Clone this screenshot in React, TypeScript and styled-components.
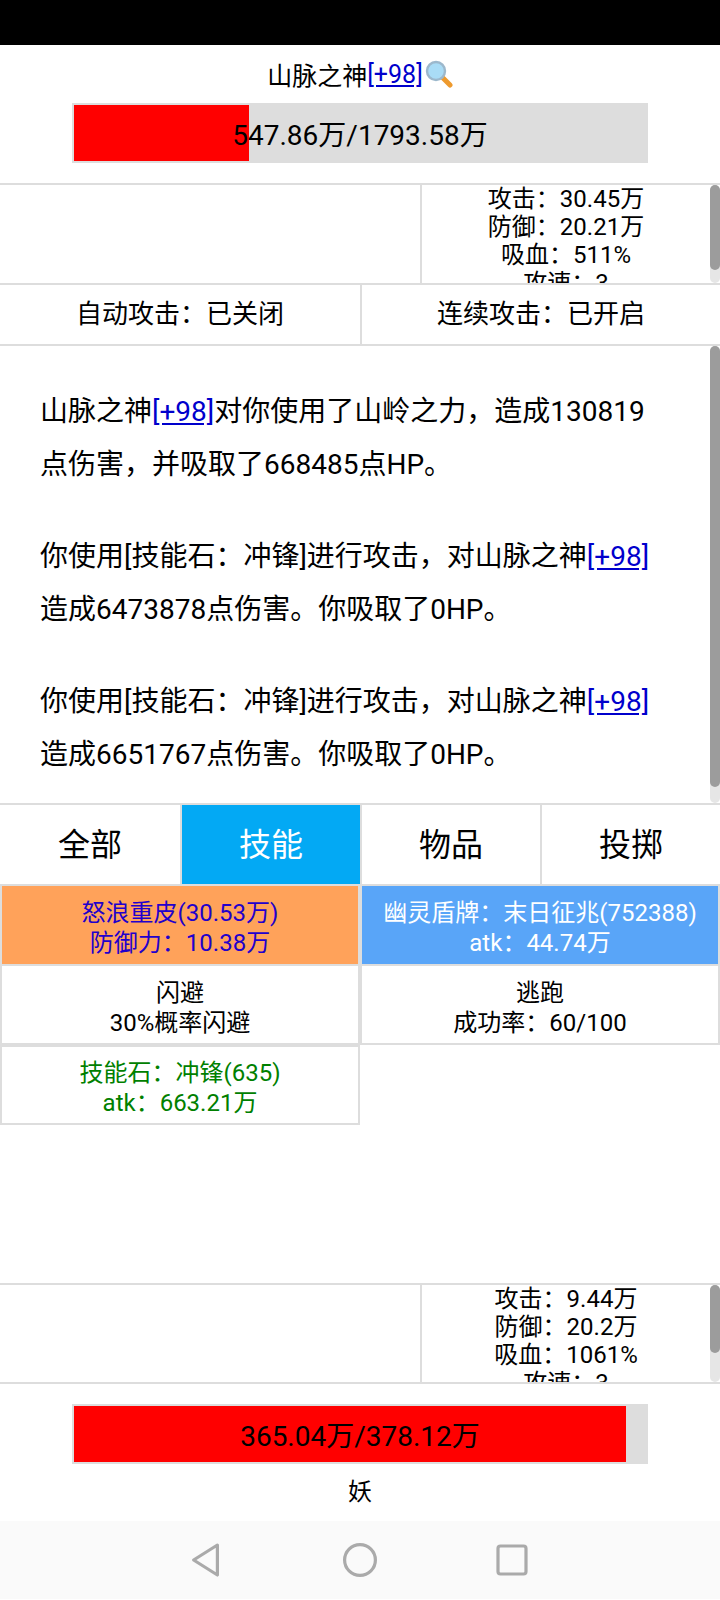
import React from 'react';
import styled, { createGlobalStyle } from 'styled-components';

type Tone = 'plain' | 'armor' | 'shield' | 'stone';

const skills: { lines: string[]; tone: Tone; joined?: boolean }[] = [
  { lines: ['怒浪重皮(30.53万)', '防御力：10.38万'], tone: 'armor' },
  { lines: ['幽灵盾牌：末日征兆(752388)', 'atk：44.74万'], tone: 'shield' },
  { lines: ['闪避', '30%概率闪避'], tone: 'plain', joined: true },
  { lines: ['逃跑', '成功率：60/100'], tone: 'plain', joined: true },
  { lines: ['技能石：冲锋(635)', 'atk：663.21万'], tone: 'stone' },
];

const tabs = ['全部', '技能', '物品', '投掷'];

const Boss = () => (
  <>
    山脉之神<LevelLink>[+98]</LevelLink>
  </>
);

const App: React.FC = () => {
  return (
    <Page lang="zh-CN">
      <GlobalStyle />
      <StatusBar />
      <Title>
        <Boss />
        <Lens viewBox="0 0 28 28">
          <line x1="17" y1="17" x2="25" y2="25" stroke="#ee9a2e" strokeWidth="5" strokeLinecap="round" />
          <circle cx="11" cy="11" r="9" fill="#a9dcf6" stroke="#9cb8cc" strokeWidth="2.4" />
        </Lens>
      </Title>
      <HpBar current={547.86} max={1793.58} label="547.86万/1793.58万" />
      <StatPanel top>
        <div />
        <StatCell>
          <StatList>
            <div>攻击：30.45万</div>
            <div>防御：20.21万</div>
            <div>吸血：511%</div>
            <div>攻速：3</div>
          </StatList>
          <ScrollTrack>
            <ScrollThumb size={85} />
          </ScrollTrack>
        </StatCell>
      </StatPanel>
      <ToggleRow>
        <Toggle>自动攻击：已关闭</Toggle>
        <Toggle>连续攻击：已开启</Toggle>
      </ToggleRow>
      <LogPanel>
        <BattleLog>
          <p>
            <Boss />对你使用了山岭之力，造成130819点伤害，并吸取了668485点HP。
          </p>
          <p>
            你使用[技能石：冲锋]进行攻击，对山脉之神<LevelLink>[+98]</LevelLink>造成6473878点伤害。你吸取了0HP。
          </p>
          <p>
            你使用[技能石：冲锋]进行攻击，对山脉之神<LevelLink>[+98]</LevelLink>造成6651767点伤害。你吸取了0HP。
          </p>
        </BattleLog>
        <ScrollTrack>
          <ScrollThumb size={441} />
        </ScrollTrack>
      </LogPanel>
      <TabBar>
        {tabs.map((t) => (
          <Tab key={t} active={t === '技能'}>
            {t}
          </Tab>
        ))}
      </TabBar>
      <SkillGrid>
        {skills.map((s) => (
          <SkillCard key={s.lines[0]} tone={s.tone} joined={s.joined}>
            {s.lines.map((l) => (
              <div key={l}>{l}</div>
            ))}
          </SkillCard>
        ))}
      </SkillGrid>
      <StatPanel>
        <div />
        <StatCell>
          <StatList>
            <div>攻击：9.44万</div>
            <div>防御：20.2万</div>
            <div>吸血：1061%</div>
            <div>攻速：3</div>
          </StatList>
          <ScrollTrack>
            <ScrollThumb size={68} />
          </ScrollTrack>
        </StatCell>
      </StatPanel>
      <HpBar current={365.04} max={378.12} label="365.04万/378.12万" bottom />
      <PlayerName>妖</PlayerName>
      <NavBar>
        <svg width="36" height="36" viewBox="0 0 36 36">
          <path d="M27.4 3 L3.6 18 L27.4 33 Z" fill="none" stroke="#aaa" strokeWidth="3.2" strokeLinejoin="round" />
        </svg>
        <svg width="36" height="36" viewBox="0 0 36 36">
          <circle cx="18" cy="18" r="15.4" fill="none" stroke="#aaa" strokeWidth="3.2" />
        </svg>
        <svg width="34" height="34" viewBox="0 0 34 34">
          <rect x="3" y="3" width="28" height="28" rx="2.5" fill="none" stroke="#aaa" strokeWidth="3.2" />
        </svg>
      </NavBar>
    </Page>
  );
};

const HpBar: React.FC<{ current: number; max: number; label: string; bottom?: boolean }> = ({
  current,
  max,
  label,
  bottom,
}) => (
  <BarTrack bottom={bottom}>
    <BarFill style={{ width: `${(current / max) * 100}%` }} />
    <BarLabel>{label}</BarLabel>
  </BarTrack>
);

export default App;

const GlobalStyle = createGlobalStyle`
  html, body {
    margin: 0;
    padding: 0;
    background: #fff;
  }
  body {
    font-family: Roboto, "Noto Sans CJK SC", sans-serif;
    color: #000;
  }
  * {
    box-sizing: border-box;
  }
`;

const Page = styled.div`
  width: 720px;
  height: 1600px;
  display: flex;
  flex-direction: column;
  overflow: hidden;
`;

const StatusBar = styled.div`
  height: 45px;
  background: #000;
`;

const Title = styled.div`
  height: 58px;
  display: flex;
  align-items: center;
  justify-content: center;
  font-size: 25px;
`;

const Lens = styled.svg`
  width: 28px;
  height: 28px;
  margin-left: 2px;
`;

const LevelLink = styled.span`
  color: #0000cc;
  text-decoration: underline;
`;

const BarTrack = styled.div<{ bottom?: boolean }>`
  position: relative;
  width: 576px;
  height: 60px;
  margin: ${(p) => (p.bottom ? '20px' : '0')} 72px ${(p) => (p.bottom ? '0' : '20px')};
  border: 2px solid #ddd;
  background: #ddd;
`;

const BarFill = styled.div`
  height: 100%;
  background: #f00;
`;

const BarLabel = styled.div`
  position: absolute;
  inset: 0;
  display: flex;
  align-items: center;
  justify-content: center;
  font-size: 28px;
`;

const StatPanel = styled.div<{ top?: boolean }>`
  height: ${(p) => (p.top ? '100px' : '101px')};
  flex: none;
  display: grid;
  grid-template-columns: 420px 1fr;
  border-top: 2px solid #ddd;
  border-bottom: ${(p) => (p.top ? '0' : '2px solid #ddd')};
`;

const StatCell = styled.div`
  position: relative;
  border-left: 2px solid #ddd;
  overflow: hidden;
`;

const StatList = styled.div`
  padding-right: 10px;
  text-align: center;
  font-size: 24px;
  line-height: 28px;
`;

const ScrollTrack = styled.div`
  position: absolute;
  top: 0;
  right: 0;
  bottom: 0;
  width: 10px;
  border-radius: 5px;
  background: #e6e6e6;
`;

const ScrollThumb = styled.div<{ size: number }>`
  height: ${(p) => p.size}px;
  border-radius: 5px;
  background: #9c9c9c;
`;

const ToggleRow = styled.div`
  height: 63px;
  flex: none;
  display: grid;
  grid-template-columns: 1fr 1fr;
  border-top: 2px solid #ddd;
  border-bottom: 2px solid #ddd;
`;

const Toggle = styled.div`
  display: flex;
  align-items: center;
  justify-content: center;
  padding-bottom: 7px;
  font-size: 26px;
  & + & {
    border-left: 2px solid #ddd;
  }
`;

const LogPanel = styled.div`
  position: relative;
  height: 457px;
  flex: none;
  overflow: hidden;
`;

const BattleLog = styled.div`
  padding: 0 60px 0 40px;
  font-size: 28px;
  line-height: 53px;
  > p {
    margin: 39px 0;
  }
`;

const TabBar = styled.div`
  height: 81px;
  flex: none;
  display: grid;
  grid-template-columns: repeat(4, 1fr);
  border-top: 2px solid #ddd;
`;

const Tab = styled.div<{ active?: boolean }>`
  display: flex;
  align-items: center;
  justify-content: center;
  padding-bottom: 6px;
  font-size: 32px;
  color: ${(p) => (p.active ? '#fff' : '#000')};
  background: ${(p) => (p.active ? '#03a9f4' : '#fff')};
  & + & {
    border-left: 2px solid #ddd;
  }
`;

const toneStyles: Record<Tone, string> = {
  plain: 'background: #fff; color: #000;',
  armor: 'background: #ffa25a; color: #2200cc;',
  shield: 'background: #59a5f8; color: #fff;',
  stone: 'background: #fff; color: #008000;',
};

const SkillGrid = styled.div`
  height: 399px;
  flex: none;
  display: grid;
  grid-template-columns: 1fr 1fr;
  grid-template-rows: 82px 79px 80px;
  align-content: start;
`;

const SkillCard = styled.div<{ tone: Tone; joined?: boolean }>`
  ${(p) => toneStyles[p.tone]}
  border: 2px solid #ddd;
  ${(p) => (p.joined ? 'border-top: 0;' : '')}
  display: flex;
  flex-direction: column;
  align-items: center;
  justify-content: center;
  padding-top: 6px;
  font-size: 24px;
  line-height: 30px;
`;

const PlayerName = styled.div`
  height: 57px;
  display: flex;
  align-items: center;
  justify-content: center;
  padding-bottom: 6px;
  font-size: 24px;
`;

const NavBar = styled.div`
  height: 78px;
  flex: none;
  display: grid;
  grid-template-columns: repeat(3, 152px);
  justify-content: center;
  justify-items: center;
  align-items: center;
  background: #fafafa;
`;
